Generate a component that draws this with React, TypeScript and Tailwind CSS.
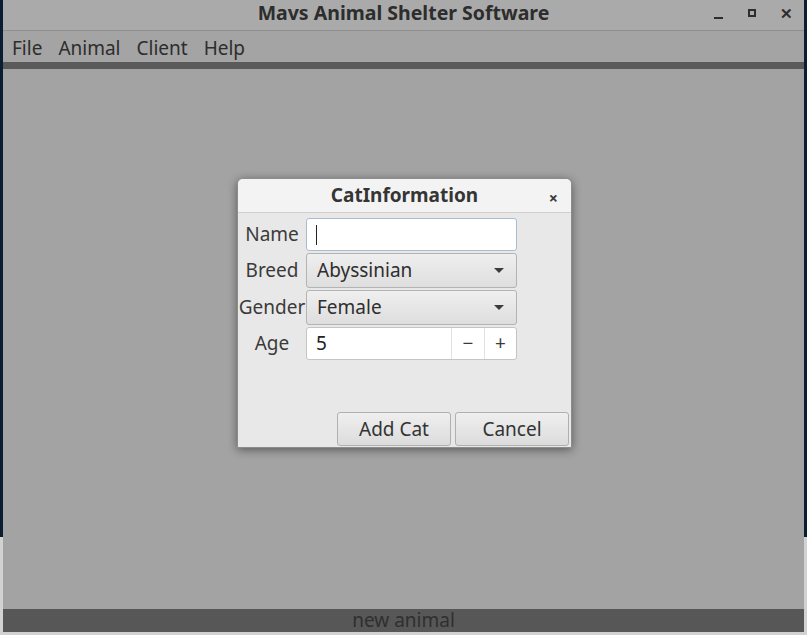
const fontStack = { fontFamily: '"Noto Sans", "Open Sans", sans-serif' }

const Caret = () => (
  <svg width="10" height="6" viewBox="0 0 10 6" className="shrink-0">
    <path d="M0 0 L10 0 L5 5 Z" fill="#3c3c3c" />
  </svg>
)

const Combo = ({ value }: { value: string }) => (
  <div className="h-[35px] w-[211px] flex items-center justify-between pl-[10px] pr-[12px] rounded-[3px] border border-[#b3b3b3] bg-gradient-to-b from-[#efefef] to-[#dedede] text-[19px] text-[#2e2e2e]">
    <span>{value}</span>
    <Caret />
  </div>
)

const CatDialog = () => {
  const label = "w-[68px] text-center text-[19px] text-[#3a3a3a] leading-none"

  return (
    <div className="absolute left-[237px] top-[178px] w-[335px] h-[270px] flex flex-col rounded-t-[6px] bg-[#e8e8e8] border border-[#8c8c8c] shadow-[0_2px_10px_rgba(0,0,0,0.45)] overflow-hidden">
      <div className="h-[34px] shrink-0 relative flex items-center justify-center bg-[#f3f3f3] border-b border-[#cfcfcf]">
        <span className="font-bold text-[19px] text-[#353535]">CatInformation</span>
        <span className="absolute right-[13px] top-[7px] text-[16px] font-bold text-[#3a3a3a]">×</span>
      </div>

      <div className="flex flex-col gap-[2px] pt-[5px]">
        <div className="flex items-center">
          <span className={label}>Name</span>
          <div className="h-[33px] w-[211px] flex items-center pl-[9px] rounded-[3px] border border-[#a9bcd2] bg-white">
            <div className="w-[1px] h-[20px] bg-[#222]" />
          </div>
        </div>
        <div className="flex items-center">
          <span className={label}>Breed</span>
          <Combo value="Abyssinian" />
        </div>
        <div className="flex items-center">
          <span className={label}>Gender</span>
          <Combo value="Female" />
        </div>
        <div className="flex items-center">
          <span className={label}>Age</span>
          <div className="h-[33px] w-[211px] flex rounded-[3px] border border-[#c4c4c4] bg-white text-[19px] text-[#222]">
            <span className="flex-1 flex items-center pl-[9px]">5</span>
            <span className="w-[33px] flex items-center justify-center border-l border-[#e2e2e2] text-[#3a3a3a]">−</span>
            <span className="w-[32px] flex items-center justify-center border-l border-[#e2e2e2] text-[#3a3a3a]">+</span>
          </div>
        </div>
      </div>

      <div className="mt-auto mb-[1px] flex justify-end gap-[4px] pr-[2px]">
        {["Add Cat", "Cancel"].map(b => (
          <button key={b} className="w-[114px] h-[34px] rounded-[3px] border border-[#b0b0b0] bg-gradient-to-b from-[#efefef] to-[#dcdcdc] text-[19px] text-[#333]">
            {b}
          </button>
        ))}
      </div>
    </div>
  )
}

const App = () => {
  const menus = ["File", "Animal", "Client", "Help"]

  return (
    <div className="w-[807px] h-[635px] flex bg-[#d2d2d2] relative overflow-hidden" style={fontStack}>
      <div className="w-[3px] h-[537px] bg-[#0b1e31]" />

      <div className="w-[801px] h-[632px] flex flex-col">
        <div className="h-[31px] shrink-0 relative flex items-center justify-center bg-[#aaaaaa] border-b border-[#8e8e8e]">
          <span className="font-bold text-[19.5px] text-[#2d2d2d] -mt-[5px]">Mavs Animal Shelter Software</span>
          <div className="absolute right-[1px] top-0 h-full flex text-[#2d2d2d]">
            <div className="w-[34px] flex items-center justify-center">
              <div className="w-[9px] h-[2px] bg-[#2d2d2d] mt-[6px]" />
            </div>
            <div className="w-[34px] flex items-center justify-center">
              <div className="w-[8px] h-[8px] border-2 border-[#2d2d2d] -mt-[4px]" />
            </div>
            <div className="w-[34px] flex items-center justify-center">
              <span className="text-[15px] font-bold leading-none -mt-[4px]">✕</span>
            </div>
          </div>
        </div>

        <div className="h-[31px] shrink-0 flex items-center gap-[16px] pl-[9px] pt-[3px] bg-[#a4a4a4] text-[19px] text-[#2d2d2d]">
          {menus.map(m => (
            <span key={m}>{m}</span>
          ))}
        </div>
        <div className="h-[7px] shrink-0 bg-[#5a5a5a]" />

        <div className="flex-1 bg-[#a3a3a3]" />

        <div className="h-[23px] shrink-0 flex items-center justify-center bg-[#575757] text-[19px] text-[#2f2f2f] leading-none">
          new animal
        </div>
      </div>

      <div className="w-[3px] h-[537px] bg-[#0b1e31]" />

      <CatDialog />
    </div>
  )
}

export default App
